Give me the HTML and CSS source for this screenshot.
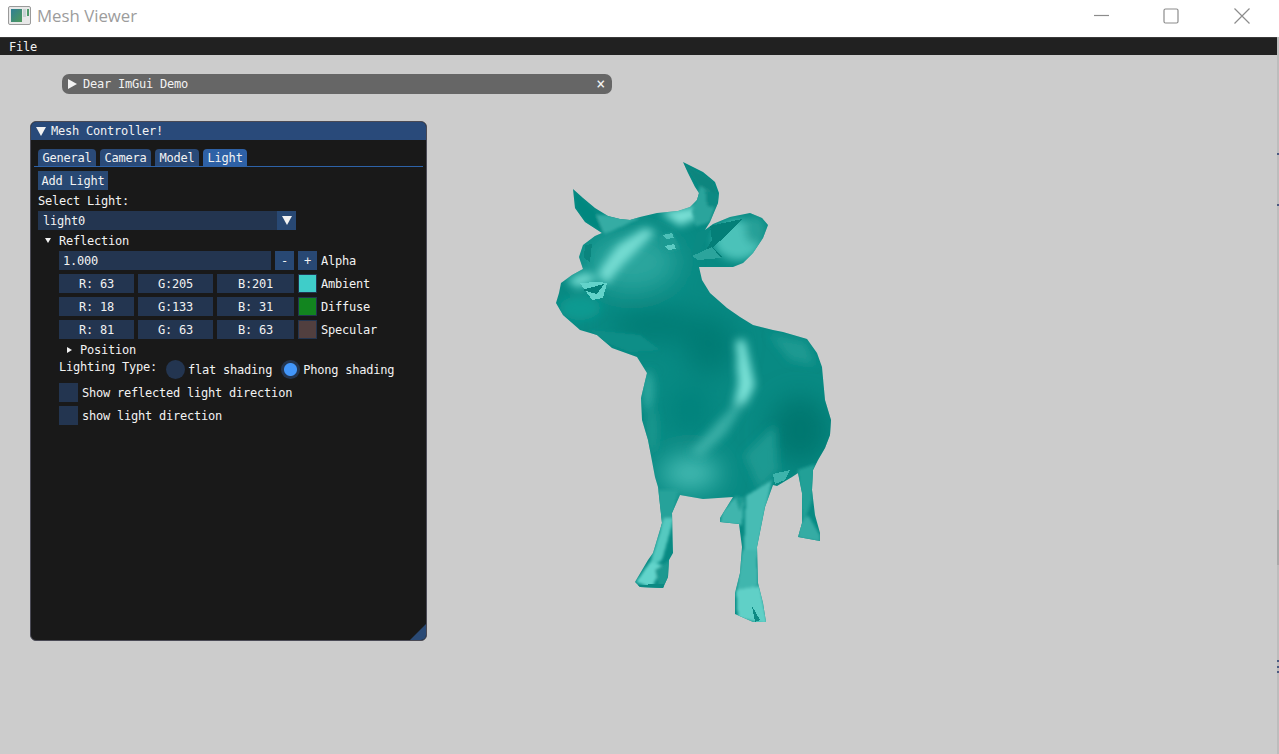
FILE: index.html
```html
<!DOCTYPE html>
<html lang="en">
<head>
  <meta charset="UTF-8" />
  <title>Mesh Viewer</title>
  <link rel="stylesheet" href="styles.css">
</head>
<body>

  <div class="app">
    <div class="titlebar">
      <svg class="app-icon" viewBox="0 0 23 20">
        <defs>
          <linearGradient id="iconFill" x1="0" y1="0" x2="1" y2="1">
            <stop offset="0" stop-color="#2f7f95" />
            <stop offset="1" stop-color="#4f9a5a" />
          </linearGradient>
        </defs>
        <rect x="0.5" y="0.5" width="22" height="18" rx="1.5" fill="#e8e8e8" stroke="#9a9a9a" />
        <rect x="3" y="3" width="11" height="13" fill="url(#iconFill)" />
        <rect x="15" y="3" width="3" height="8" fill="#c6d2d2" />
        <rect x="19" y="3" width="2" height="7" fill="#4f9a6a" />
      </svg>
      <span class="app-name">Mesh Viewer</span>
      <div class="win-buttons">
        <svg class="win-btn" viewBox="0 0 16 16"><path d="M2 7.5H17" /></svg>
        <svg class="win-btn" viewBox="0 0 16 16"><rect x="1" y="1" width="14" height="14" rx="1.5" /></svg>
        <svg class="win-btn" viewBox="0 0 16 16"><path d="M0.5 0.5L15.5 15.5M15.5 0.5L0.5 15.5" /></svg>
      </div>
    </div>

    <div class="menubar"><span>File</span></div>

    <div class="canvas">

      <svg class="cow" viewBox="550 155 290 480">
        <defs>
          <clipPath id="cowShape">
            <polygon points="573,189 583,198 595,208 608,216 620,219 630,220 640,217 657,213 678,211 690,207 697,200 699,193 695,187 688,173 683,162 703,172 715,182 719,193 718,203 710,222 705,230 713,224 730,217 750,213 762,218 768,225 763,238 753,253 743,263 733,267 699,267 702,280 710,293 727,308 740,317 753,325 773,330 783,332 807,339 817,353 822,367 825,400 831,420 830,435 825,448 818,460 813,470 812,490 815,515 820,533 820,541 798,537 802,523 802,493 798,473 792,477 777,486 773,485 765,507 757,547 758,583 763,603 766,622 753,622 735,614 735,593 740,573 742,547 739,524 720,522 720,518 733,497 718,498 703,499 680,495 672,513 673,553 669,560 668,577 663,588 640,587 635,582 648,560 653,553 662,523 658,487 655,477 648,440 642,420 641,398 647,373 637,357 612,348 597,335 580,330 563,315 556,303 559,293 561,283 572,275 583,269 579,257 583,245 595,236 602,233 585,222 575,208" />
          </clipPath>
          <filter id="wide" x="-100%" y="-100%" width="300%" height="300%"><feGaussianBlur stdDeviation="13" /></filter>
          <filter id="soft" x="-60%" y="-60%" width="220%" height="220%"><feGaussianBlur stdDeviation="4" /></filter>
          <filter id="tight" x="-60%" y="-60%" width="220%" height="220%"><feGaussianBlur stdDeviation="1.5" /></filter>
        </defs>
        <g clip-path="url(#cowShape)">
          <rect x="550" y="155" width="290" height="480" fill="#088a83" />

          <g filter="url(#wide)">
            <ellipse cx="632" cy="262" rx="46" ry="30" fill="#2ba69e" />
            <ellipse cx="655" cy="325" rx="44" ry="16" fill="#007c75" />
            <ellipse cx="710" cy="345" rx="26" ry="30" fill="#007c75" />
            <ellipse cx="800" cy="430" rx="30" ry="34" fill="#00776f" />
            <ellipse cx="690" cy="410" rx="20" ry="24" fill="#03827b" />
            <ellipse cx="690" cy="473" rx="30" ry="16" fill="#4cc0b8" />
          </g>

          <g filter="url(#soft)">
            <polygon points="598,272 618,245 645,228 655,232 625,262 606,285" fill="#74dcd2" />
            <polygon points="660,212 697,206 702,216 680,226" fill="#7de2d8" />
            <polygon points="566,280 585,272 600,278 578,288" fill="#6fd9cf" />
            <ellipse cx="580" cy="308" rx="20" ry="12" fill="#119a91" />
            <polygon points="736,340 745,340 755,385 746,405 732,412 738,385" fill="#78e0d6" />
            <polygon points="734,405 748,398 725,435 700,458 690,452 712,428" fill="#37ada5" />
            <polygon points="744,455 775,425 778,470 760,490" fill="#1f9a92" />
            <polygon points="770,335 806,342 815,365 790,360" fill="#1a9a92" />
            <ellipse cx="648" cy="390" rx="6" ry="20" fill="#2ca69e" />
            <ellipse cx="652" cy="430" rx="5" ry="22" fill="#1d988f" />
            <ellipse cx="738" cy="240" rx="24" ry="20" fill="#4cc2b9" />
            <ellipse cx="755" cy="230" rx="10" ry="14" fill="#27a098" />
          </g>

          <g filter="url(#tight)">
            <polygon points="590,214 640,218 625,225 605,234" fill="#35aca4" />
            <polygon points="575,192 595,212 603,232 586,222 576,208" fill="#06877f" />
            <polygon points="684,164 712,180 718,196 702,190" fill="#07857e" />
            <polygon points="700,186 718,196 710,222 696,226 692,212" fill="#2aa49c" />
            <polygon points="705,190 719,195 716,208 707,206" fill="#0b8a83" />
            <polygon points="658,490 678,490 672,525 658,528" fill="#28a29a" />
            <polygon points="664,518 674,518 662,560 648,570" fill="#55c9c0" />
            <polygon points="636,582 650,562 662,565 652,588" fill="#62d4cb" />
            <polygon points="655,570 670,560 668,580 660,590" fill="#1c9990" />
            <polygon points="746,496 772,480 762,530 757,560 744,550" fill="#46bcb4" />
            <polygon points="742,550 757,550 758,585 736,595" fill="#3fb6ae" />
            <polygon points="736,590 760,586 768,625 738,618" fill="#60d0c7" />
            <polygon points="722,512 736,496 744,500 742,525 720,524" fill="#3fb5ad" />
            <polygon points="735,497 745,497 740,512" fill="#1e9b93" />
            <polygon points="798,470 815,464 812,500 803,525" fill="#21a097" />
            <polygon points="798,526 808,515 820,535 820,542 798,538" fill="#34aca4" />
            <polygon points="590,330 640,335 660,350 630,352 600,340" fill="#0d8e87" />
            <polygon points="660,236 672,232 680,248 668,252 660,248" fill="#1f9a92" />
          </g>

          <polygon points="710,226 742,219 726,236 713,247 722,257 700,259 712,240" fill="#047f78" />
          <polygon points="692,256 712,247 721,258 698,260" fill="#2ba49c" />
          <polygon points="697,233 711,228 700,250 691,257" fill="#0a8a83" />
          <polygon points="580,283 598,282 607,283 603,298 592,300" fill="#63d3ca" />
          <polygon points="582,290 604,284 597,294" fill="#047f78" />
          <polygon points="663,235 672,233 674,238 666,239" fill="#4cc0b8" />
          <polygon points="664,246 674,244 676,249 668,250" fill="#5ccbc3" />
          <polygon points="585,245 592,244 590,262 584,258" fill="#0b857e" />
          <polygon points="752,606 760,620 755,622" fill="#0d8a83" />
          <polygon points="632,585 664,584 664,589 640,589" fill="#0c8a83" />
          <polygon points="773,474 790,470 785,480 775,484" fill="#3db3ab" />
        </g>
      </svg>

      <div class="demo-window">
        <span class="arrow-right big"></span>
        <span class="demo-title">Dear ImGui Demo</span>
        <span class="demo-close">×</span>
      </div>

      <div class="panel">
        <div class="panel-title">
          <span class="arrow-down big"></span>
          <span>Mesh Controller!</span>
        </div>
        <div class="panel-body">
          <div class="tabs">
            <span class="tab">General</span>
            <span class="tab">Camera</span>
            <span class="tab">Model</span>
            <span class="tab active">Light</span>
          </div>

          <button class="button add-light">Add Light</button>
          <div class="text">Select Light:</div>

          <div class="combo">
            <span class="combo-value">light0</span>
            <span class="combo-btn"><span class="arrow-down big"></span></span>
          </div>

          <div class="tree-node">
            <span class="arrow-down small"></span>
            <span class="text">Reflection</span>
          </div>

          <div class="row indent">
            <span class="field alpha-field">1.000</span>
            <button class="button step">-</button>
            <button class="button step">+</button>
            <span class="label">Alpha</span>
          </div>

          <div class="row indent">
            <span class="field rgb">R: 63</span>
            <span class="field rgb">G:205</span>
            <span class="field rgb last">B:201</span>
            <span class="swatch ambient"></span>
            <span class="label">Ambient</span>
          </div>
          <div class="row indent">
            <span class="field rgb">R: 18</span>
            <span class="field rgb">G:133</span>
            <span class="field rgb last">B: 31</span>
            <span class="swatch diffuse"></span>
            <span class="label">Diffuse</span>
          </div>
          <div class="row indent">
            <span class="field rgb">R: 81</span>
            <span class="field rgb">G: 63</span>
            <span class="field rgb last">B: 63</span>
            <span class="swatch specular"></span>
            <span class="label">Specular</span>
          </div>

          <div class="tree-node nested">
            <span class="arrow-right small"></span>
            <span class="text">Position</span>
          </div>

          <div class="row indent lighting">
            <span class="lighting-label">Lighting Type:</span>
            <span class="radio"></span>
            <span class="radio-label">flat shading</span>
            <span class="radio on"></span>
            <span class="radio-label">Phong shading</span>
          </div>

          <div class="row indent">
            <span class="checkbox"></span>
            <span class="label">Show reflected light direction</span>
          </div>
          <div class="row indent">
            <span class="checkbox"></span>
            <span class="label">show light direction</span>
          </div>
        </div>
        <span class="grip"></span>
      </div>

      <div class="edge">
        <span class="edge-dark"></span>
        <span class="mark m1"></span>
        <span class="mark m2"></span>
        <span class="mark m3"></span>
        <span class="mark m4"></span>
        <span class="mark m5"></span>
      </div>
    </div>
  </div>

</body>
</html>
```

FILE: styles.css
```css
* {
  box-sizing: border-box;
}

body {
  margin: 0;
  background-color: #cccccc;
  font-family: "DejaVu Sans Mono", "Liberation Mono", monospace;
  font-size: 12px;
  letter-spacing: -0.22px;
  color: #f2f2f2;
  overflow: hidden;
}

.app {
  display: flex;
  flex-direction: column;
  width: 1279px;
  height: 754px;
}

/* window chrome */
.titlebar {
  display: flex;
  align-items: center;
  height: 37px;
  padding-left: 8px;
  padding-bottom: 6px;
  background: white;
  font-family: "Open Sans", "Liberation Sans", sans-serif;
  letter-spacing: 0;
}

.app-icon {
  width: 23px;
  height: 20px;
}

.app-name {
  margin-left: 6px;
  font-size: 16.8px;
  color: #9c9c9c;
}

.win-buttons {
  display: flex;
  gap: 55px;
  margin-left: auto;
  margin-right: 29px;
  padding-top: 1px;
}

.win-btn {
  width: 16px;
  height: 16px;
  fill: none;
  stroke: #8c8c8c;
  stroke-width: 1.2;
  overflow: visible;
}

.menubar {
  display: flex;
  align-items: center;
  height: 18px;
  width: 1277px;
  padding-left: 9px;
  background-color: #212121;
  border-top: 1px solid #3a3a3a;
}

.canvas {
  position: relative;
  flex: 1;
}

.cow {
  position: absolute;
  left: 550px;
  top: 100px;
  width: 290px;
  height: 480px;
  shape-rendering: crispEdges;
}

/* collapsed demo window */
.demo-window {
  position: absolute;
  left: 62px;
  top: 19px;
  display: flex;
  align-items: center;
  width: 550px;
  height: 20px;
  padding: 0 6px;
  background-color: #666666;
  border-radius: 7px;
}

.demo-title {
  margin-left: 6px;
}

.demo-close {
  margin-left: auto;
  margin-right: 1px;
  font-size: 15px;
  line-height: 1;
}

/* mesh controller window */
.panel {
  position: absolute;
  left: 30px;
  top: 66px;
  width: 397px;
  height: 520px;
  background-color: #191919;
  border: 1px solid #4a4a55;
  border-radius: 6px;
  overflow: hidden;
}

.panel-title {
  display: flex;
  align-items: center;
  gap: 5px;
  height: 18px;
  padding-left: 5px;
  background-color: #294a7a;
}

.panel-body {
  display: flex;
  flex-direction: column;
  align-items: flex-start;
  gap: 4px;
  padding: 9px 7px;
}

.tabs {
  display: flex;
  gap: 4px;
  align-self: stretch;
  margin: 0 -4px;
  padding-left: 4px;
  height: 18px;
  border-bottom: 1px solid #2d62a8;
}

.tab {
  display: flex;
  align-items: center;
  height: 17px;
  padding: 0 4.5px;
  background-color: #2a4a78;
  border-radius: 4px 4px 0 0;
}

.tab.active {
  background-color: #2e61a6;
}

.button {
  display: flex;
  align-items: center;
  justify-content: center;
  height: 19px;
  padding: 0;
  border: none;
  background-color: #284873;
  color: #f2f2f2;
  font: inherit;
  letter-spacing: inherit;
}

.add-light {
  width: 70px;
}

.step {
  width: 19px;
}

/* line box taller than the row puts the text one pixel lower */
.text {
  height: 13px;
  line-height: 15px;
}

.label {
  padding-top: 1px;
}

.combo {
  display: flex;
  align-items: center;
  width: 258px;
  height: 19px;
  background-color: #233550;
}

.combo-value {
  flex: 1;
  padding-left: 5px;
}

.combo-btn {
  display: flex;
  align-items: center;
  justify-content: center;
  width: 19px;
  height: 19px;
  background-color: #284873;
}

.tree-node {
  display: flex;
  align-items: center;
  gap: 8px;
  height: 13px;
  margin-left: 7px;
}

.tree-node.nested {
  margin-left: 29px;
}

.row {
  display: flex;
  align-items: center;
  gap: 4px;
  height: 19px;
}

.indent {
  margin-left: 21px;
}

.field {
  display: flex;
  align-items: center;
  height: 19px;
  padding-top: 1px;
  background-color: #233550;
}

.alpha-field {
  width: 212px;
  padding-left: 4px;
}

.rgb {
  justify-content: center;
  width: 75px;
}

.rgb.last {
  width: 77px;
}

.swatch {
  width: 19px;
  height: 19px;
  border: 1px solid #233550;
}

.ambient {
  background-color: #3fcdc9;
}

.diffuse {
  background-color: #12851f;
}

.specular {
  background-color: #513f3f;
}

.lighting-label {
  align-self: flex-start;
  height: 13px;
  line-height: 15px;
  margin-right: 5px;
}

.radio {
  width: 19px;
  height: 19px;
  background-color: #233550;
  border-radius: 50%;
}

.radio.on {
  margin-left: 5px;
  background: radial-gradient(circle, #4296fa 0 6px, #233550 7px);
}

.radio-label {
  margin-left: -1px;
}

.checkbox {
  width: 19px;
  height: 19px;
  background-color: #233550;
}

.grip {
  position: absolute;
  right: 0;
  bottom: 0;
  width: 16px;
  height: 16px;
  background-color: #2a4a75;
  clip-path: polygon(100% 0, 100% 100%, 0 100%);
}

/* triangles */
.arrow-right,
.arrow-down {
  flex: none;
  width: 0;
  height: 0;
}

.arrow-right.big {
  border-left: 9px solid #f2f2f2;
  border-top: 5px solid transparent;
  border-bottom: 5px solid transparent;
}

.arrow-down.big {
  border-top: 9px solid #f2f2f2;
  border-left: 5px solid transparent;
  border-right: 5px solid transparent;
}

.arrow-right.small {
  border-left: 5px solid #f2f2f2;
  border-top: 3px solid transparent;
  border-bottom: 3px solid transparent;
}

.arrow-down.small {
  border-top: 5px solid #f2f2f2;
  border-left: 3px solid transparent;
  border-right: 3px solid transparent;
}

/* strip of the window behind, at the right edge */
.edge {
  position: absolute;
  right: 0;
  top: -18px;
  width: 2px;
  height: 717px;
  background-color: #bdbdbd;
}

.edge-dark {
  position: absolute;
  left: 0;
  top: 473px;
  width: 2px;
  height: 55px;
  background-color: #a9a9a9;
}

.mark {
  position: absolute;
  left: 0;
  width: 2px;
  height: 2px;
  background-color: #4a5a80;
}

.m1 { top: 116px; }
.m2 { top: 167px; }
.m3 { top: 623px; }
.m4 { top: 629px; }
.m5 { top: 634px; }
```
